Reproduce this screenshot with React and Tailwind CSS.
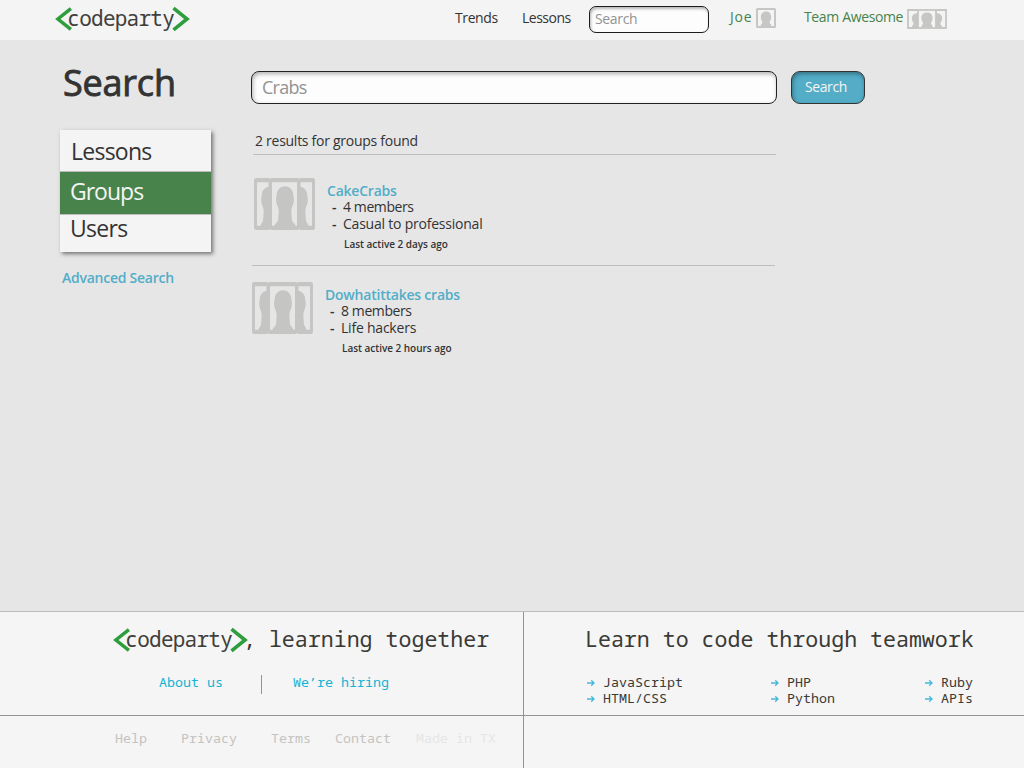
const sans = "font-['Open_Sans','Noto_Sans',sans-serif]";
const mono = "font-['Noto_Sans_Mono','DejaVu_Sans_Mono',monospace]";

function Logo() {
  return (
    <span className="flex h-[26px] w-[135px] items-center">
      <svg width="18" height="26" viewBox="0 0 18 26" fill="none" stroke="#2e9e3d" strokeWidth="3.6">
        <path d="M16.5 2.2 3 13l13.5 10.8" />
      </svg>
      <span className="-mt-[2px] -ml-[5px] w-[107px] text-[21px] leading-[26px] tracking-[-0.75px] whitespace-nowrap text-[#41403a]">
        codeparty
      </span>
      <svg className="-ml-[2px] shrink-0" width="18" height="26" viewBox="0 0 18 26" fill="none" stroke="#2e9e3d" strokeWidth="3.6">
        <path d="M1.5 2.2 15 13 1.5 23.8" />
      </svg>
    </span>
  );
}

function UserIcon() {
  return (
    <svg width="20" height="20" viewBox="0 0 20 20" fill="#c6c6c4">
      <rect x="1" y="1" width="18" height="18" rx="0.6" fill="none" stroke="#c6c6c4" strokeWidth="2" />
      <path d="M10 3.600c3.200 0 5.200 2 5.200 5.200 0 2.600-.8 3.800-1.500 4.900-.1 1.400.5 2.200 1.500 2.900V18.500H4.800v-1.900c1-.7 1.600-1.500 1.500-2.900-.7-1.100-1.500-2.300-1.500-4.900C4.800 5.600 6.800 3.600 10 3.600z" />
    </svg>
  );
}

function SmallGroupIcon() {
  return (
    <svg width="40" height="20" viewBox="0 0 40 20" fill="#c6c6c4">
      <path d="M10.500 1H1v18h9.500M29.500 1H39v18h-9.500" fill="none" stroke="#c6c6c4" strokeWidth="1.800" />
      <rect x="11" y="1" width="18" height="18" fill="none" stroke="#c6c6c4" strokeWidth="1.800" />
      <path d="M20 3.600c3.400 0 5.600 2 5.600 5.200 0 2.600-.9 3.800-1.600 4.900-.1 1.400.5 2.200 1.500 2.900v1.900h-11v-1.900c1-.7 1.600-1.500 1.500-2.900-.7-1.100-1.600-2.300-1.600-4.900 0-3.200 2.200-5.200 5.600-5.200z" />
      <path d="M11 4C6.800 4.400 4.800 6.500 4.800 9.200c0 2.400 1 3.500 1.700 4.700.2 1.300-.5 2.200-1.400 2.900v1.700H11zM29 4c4.200.4 6.200 2.500 6.200 5.200 0 2.400-1 3.500-1.700 4.700-.2 1.300.5 2.200 1.400 2.900v1.700H29z" />
    </svg>
  );
}

function GroupIcon() {
  return (
    <svg className="shrink-0" width="61" height="52" viewBox="0 0 61 52" fill="#c5c5c3">
      <path d="M1.500 0h13.300l1 1 1-1H44l1 1 1-1h13.500L61 1.500v49L59.500 52H46l-1-1-1 1H16.800l-1-1-1 1H1.500L0 50.500v-49z" />
      <path d="M3 4.200h11.500v43.600H3zM18 4.200h25v43.600H18zM46.500 4.200H58v43.600H46.500z" fill="#e6e6e6" />
      <path d="M31 8.200c5 0 8 4 8.300 8.300.2 2 .7 3.500.6 6-.2 3.500-2 6-2.400 9-.3 3 0 5.500.2 8 .2 2.500.6 4 1.800 5.200 1 1 2 2.200 2.400 4H20.100c.4-1.800 1.400-3 2.400-4 1.200-1.200 1.600-2.700 1.800-5.200.2-2.500.5-5 .2-8-.4-3-2.200-5.500-2.400-9-.1-2.500.4-4 .6-6 .3-4.300 3.300-8.300 8.300-8.300z" />
      <path d="M15.500 8.600c-4.700.8-7.200 3.800-7.600 7.900-.2 2-.8 3.500-.7 6 .2 3.500 1.900 6 2.300 9 .3 3 0 5.500-.2 8-.2 2.500-.4 4-1.300 5.200-.8 1-1.500 2.200-1.800 4h9.300zM45.500 8.600c4.700.8 7.200 3.800 7.600 7.900.2 2 .8 3.500.7 6-.2 3.500-1.900 6-2.300 9-.3 3 0 5.500.2 8 .2 2.500.4 4 1.300 5.200.8 1 1.500 2.200 1.800 4h-9.300z" />
    </svg>
  );
}

function Header() {
  return (
    <header className="flex h-10 items-start bg-[#f4f4f4] text-sm leading-5 text-[#333] whitespace-nowrap">
      <a className={`mt-[6px] ml-[55px] w-[400px] ${mono}`}><Logo /></a>
      <a className="mt-[8px] w-[67px] tracking-[-0.4px]">Trends</a>
      <a className="mt-[8px] w-[67px] tracking-[-0.5px]">Lessons</a>
      <div className="mt-[6px] h-[27px] w-[120px] rounded-[7px] border-[1.500px] border-[#1c1c1c] bg-[#fdfdfd] pl-[5px] leading-[23px] tracking-[-0.35px] text-[#929292] shadow-[inset_1px_2px_3px_rgba(0,0,0,0.28)]">
        Search
      </div>
      <a className="mt-[7px] ml-[21px] w-[26px] tracking-[0.8px] text-[#47834a]">Joe</a>
      <span className="mt-[8px] w-[48px]"><UserIcon /></span>
      <a className="mt-[7px] w-[103px] tracking-[-0.36px] text-[#47834a]">Team Awesome</a>
      <span className="mt-[9px]"><SmallGroupIcon /></span>
    </header>
  );
}

function Sidebar() {
  return (
    <aside className="box-content w-[191px] pl-[60px] whitespace-nowrap">
      <h1 className="mt-[18px] h-[71px] pl-[3px] text-[36px] leading-[50px] tracking-[-0.2px] text-[#333] [-webkit-text-stroke:0.9px_#333]">Search</h1>
      <nav className="mt-px h-[122px] w-[151px] bg-[#f4f4f4] text-[23px] text-[#333] shadow-[2px_2px_4px_rgba(0,0,0,0.5)]">
        <a className="block h-[42px] border-b border-[#bdbdbd] pl-[11px] leading-[42px] tracking-[-0.75px]">Lessons</a>
        <a className="block h-[42px] bg-[#47834a] pl-[10px] leading-[39px] tracking-[-1px] text-[#f4f4f4]">Groups</a>
        <a className="block h-[38px] border-t border-[#bdbdbd] pl-[10px] leading-[26px] tracking-[-0.7px]">Users</a>
      </nav>
      <a className="mt-[15px] block pl-[2px] text-sm leading-[21px] font-semibold tracking-[-0.25px] text-[#52adc8]">Advanced Search</a>
    </aside>
  );
}

function Result({ name, members, mood, active }) {
  return (
    <div className="flex whitespace-nowrap">
      <GroupIcon />
      <div className="ml-[12px] pt-[5px] text-sm leading-4 text-[#333]">
        <a className="block font-semibold tracking-[-0.22px] text-[#52adc8]">{name}</a>
        <div className="flex"><span className="ml-[5px] w-[11px] font-semibold">-</span><span className="tracking-[-0.4px]">{members}</span></div>
        <div className="mt-px flex"><span className="ml-[5px] w-[11px] font-semibold">-</span><span className="tracking-[-0.22px]">{mood}</span></div>
        <div className="mt-[4px] ml-[17px] text-[10px] leading-4 font-semibold tracking-[-0.03px]">{active}</div>
      </div>
    </div>
  );
}

function Main() {
  return (
    <main className="w-[614px] whitespace-nowrap">
      <div className="mt-[31px] flex gap-[14px]">
        <div className="h-[33px] w-[526px] rounded-[8px] border-[1.500px] border-[#222] bg-[#fdfdfd] pl-[10px] text-[18px] leading-[30px] tracking-[-0.75px] text-[#929292] shadow-[inset_1px_2px_4px_rgba(0,0,0,0.3)]">
          Crabs
        </div>
        <button className="flex h-[33px] w-[74px] items-start rounded-[9px] border-[1.500px] border-[#333] bg-[#53adc7] pl-[13px] text-sm leading-[29px] tracking-[-0.4px] text-[#f4f4f4] shadow-[inset_1px_2px_4px_rgba(0,0,0,0.35)]">
          Search
        </button>
      </div>
      <div className="mt-[27px] ml-[2px] h-6 w-[523px] border-b border-[#bebebe] pl-[2px] text-sm leading-5 tracking-[-0.27px] text-[#333]">
        2 results for groups found
      </div>
      <div className="ml-px h-[111px] w-[523px] border-b border-[#bebebe] pt-[23px] pl-[2px]">
        <Result name="CakeCrabs" members="4 members" mood="Casual to professional" active="Last active 2 days ago" />
      </div>
      <div className="ml-px pt-4">
        <Result name="Dowhatittakes crabs" members="8 members" mood="Life hackers" active="Last active 2 hours ago" />
      </div>
    </main>
  );
}

function Language({ children }) {
  return (
    <li className="flex items-center">
      <svg className="mr-[8px] shrink-0" width="8" height="8" viewBox="0 0 8 8" fill="none" stroke="#43b8dc" strokeWidth="1.300">
        <path d="M0 5h6.800M4.200 2.300 7 5 4.200 7.700" />
      </svg>
      {children}
    </li>
  );
}

function Footer() {
  return (
    <footer className={`grid h-[157px] grid-cols-[524px_500px] grid-rows-[104px_52px] border-t border-[#bdbdbd] bg-[#f5f5f5] text-[13.330px] leading-4 whitespace-nowrap text-[#3a3a36] ${mono}`}>
      <section className="border-r border-b border-[#939393] pt-[15px]">
        <div className="ml-[113px] flex text-[21.600px] leading-6">
          <Logo />
          <span className="-ml-[5px]">, learning together</span>
        </div>
        <div className="mt-[21px] ml-[159px] flex h-[20px] text-[#12b3d3]">
          <a className="w-[102px] leading-[17px]">About us</a>
          <span className="mt-px mr-[31px] h-[19px] w-px bg-[#939393]" />
          <a className="leading-[17px]">We’re hiring</a>
        </div>
      </section>
      <section className="border-b border-[#939393] pt-[15px] pl-[61px]">
        <h2 className="text-[21.600px] leading-6">Learn to code through teamwork</h2>
        <div className="mt-[23px] ml-[2px] flex">
          <ul className="w-[184px]"><Language>JavaScript</Language><Language>HTML/CSS</Language></ul>
          <ul className="w-[154px]"><Language>PHP</Language><Language>Python</Language></ul>
          <ul><Language>Ruby</Language><Language>APIs</Language></ul>
        </div>
      </section>
      <section className="flex border-r border-[#939393] pt-[14px] pl-[115px] text-[#c3c3c1]">
        <a className="w-[66px]">Help</a>
        <a className="w-[90px]">Privacy</a>
        <a className="w-[64px]">Terms</a>
        <a className="w-[81px]">Contact</a>
        <span className="text-[#e6e6e6]">Made in TX</span>
      </section>
      <section />
    </footer>
  );
}

export default function App() {
  return (
    <div className={`flex h-[768px] w-[1024px] flex-col overflow-hidden bg-[#e6e6e6] ${sans}`}>
      <Header />
      <div className="flex flex-1">
        <Sidebar />
        <Main />
      </div>
      <Footer />
    </div>
  );
}
